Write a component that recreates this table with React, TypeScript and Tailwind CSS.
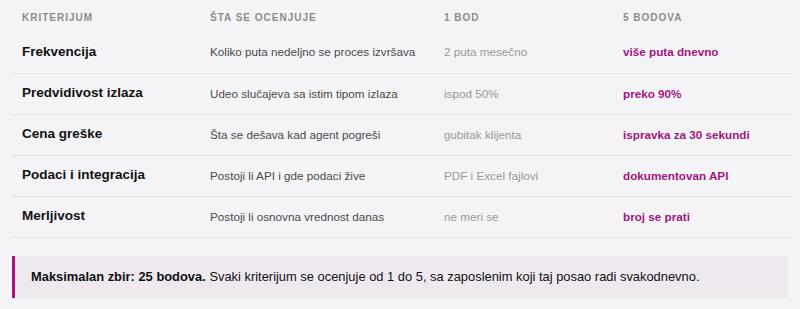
const rows = [
    { name: "Frekvencija", what: "Koliko puta nedeljno se proces izvršava", low: "2 puta mesečno", high: "više puta dnevno" },
    { name: "Predvidivost izlaza", what: "Udeo slučajeva sa istim tipom izlaza", low: "ispod 50%", high: "preko 90%" },
    { name: "Cena greške", what: "Šta se dešava kad agent pogreši", low: "gubitak klijenta", high: "ispravka za 30 sekundi" },
    { name: "Podaci i integracija", what: "Postoji li API i gde podaci žive", low: "PDF i Excel fajlovi", high: "dokumentovan API" },
    { name: "Merljivost", what: "Postoji li osnovna vrednost danas", low: "ne meri se", high: "broj se prati" },
];

const App = () => {
    return (
        <div className="min-h-[309px] w-[800px] bg-[#f4f4f6] px-3 font-['Liberation_Sans',Arial,sans-serif]">
            <table className="w-[780px] table-fixed border-collapse">
                <colgroup>
                    <col className="w-[188px]" />
                    <col className="w-[234px]" />
                    <col className="w-[179px]" />
                    <col className="w-[179px]" />
                </colgroup>
                <thead>
                    <tr className="h-[32px] text-left text-[10px] font-bold uppercase tracking-[1px] text-[#8c8c8c]">
                        <th className="pl-[10px] pt-[2px] font-bold">Kriterijum</th>
                        <th className="pl-[10px] pt-[2px] font-bold">Šta se ocenjuje</th>
                        <th className="pl-[10px] pt-[2px] font-bold">1 bod</th>
                        <th className="pl-[10px] pt-[2px] font-bold">5 bodova</th>
                    </tr>
                </thead>
                <tbody>
                    {rows.map((r, i) => (
                        <tr key={i} className={"h-[41px] border-[#e3e3e7] " + (i === 0 ? "border-b" : "border-y")}>
                            <td className="pl-[10px] text-[13.5px] font-bold text-[#111]">{r.name}</td>
                            <td className="pl-[10px] text-[11.7px] text-[#4a4a4a]">{r.what}</td>
                            <td className="pl-[10px] text-[11.7px] text-[#999]">{r.low}</td>
                            <td className="pl-[10px] text-[11.7px] font-bold text-[#a3147f]">{r.high}</td>
                        </tr>
                    ))}
                </tbody>
            </table>
            <div className="mt-[18px] flex h-[42px] items-center border-l-[3px] border-[#a3147f] bg-[#eee9ef] pl-[16px] text-[12.9px] text-[#111]">
                <p>
                    <strong>Maksimalan zbir: 25 bodova.</strong> Svaki kriterijum se ocenjuje od 1 do 5, sa zaposlenim koji taj posao radi svakodnevno.
                </p>
            </div>
        </div>
    );
};

export default App;
